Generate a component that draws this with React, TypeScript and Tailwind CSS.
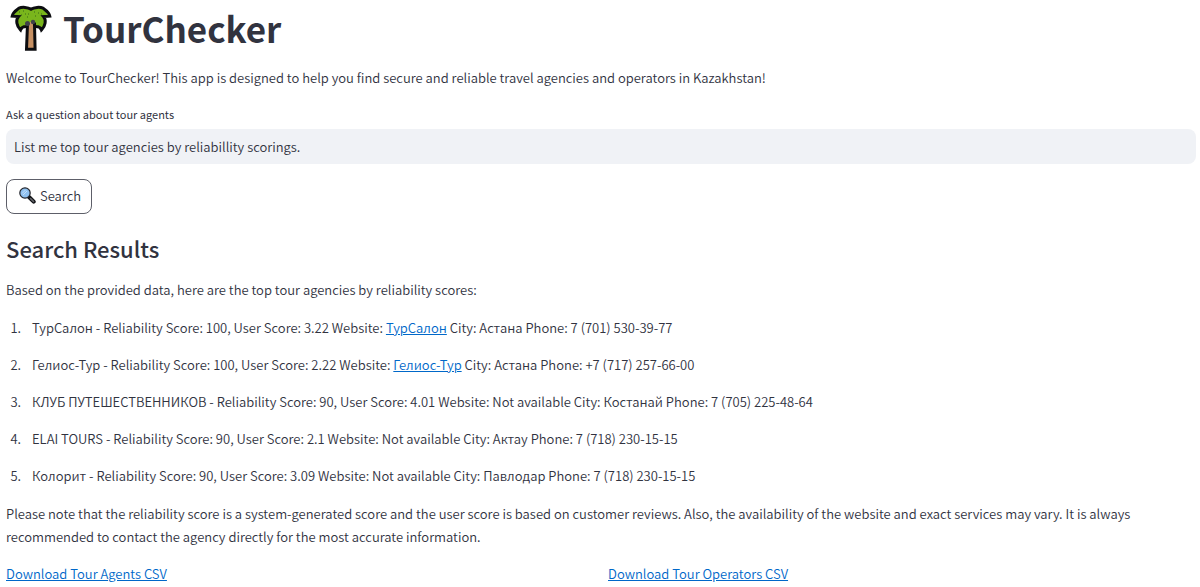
import { useState } from "react";

type Agency = {
  name: string;
  reliability: number;
  score: string;
  website?: string;
  city: string;
  phone: string;
};

const agencies: Agency[] = [
  { name: "ТурСалон", reliability: 100, score: "3.22", website: "#toursalon", city: "Астана", phone: "7 (701) 530-39-77" },
  { name: "Гелиос-Тур", reliability: 100, score: "2.22", website: "#helios-tour", city: "Астана", phone: "+7 (717) 257-66-00" },
  { name: "КЛУБ ПУТЕШЕСТВЕННИКОВ", reliability: 90, score: "4.01", city: "Костанай", phone: "7 (705) 225-48-64" },
  { name: "ELAI TOURS", reliability: 90, score: "2.1", city: "Актау", phone: "7 (718) 230-15-15" },
  { name: "Колорит", reliability: 90, score: "3.09", city: "Павлодар", phone: "7 (718) 230-15-15" },
];

function PalmIcon() {
  return (
    <svg viewBox="0 0 42 46" className="h-[46px] w-[42px] shrink-0" aria-hidden="true">
      <path
        d="M21 4.2C18 2.2 12 1.8 9 3.2 7 5 3 6.5 2.2 11.2L8.5 11.5C5.5 15 6.5 21 10.5 25C11.5 22 13 21.5 16 21.5L21 20L26 21.5C29 21.5 30.5 22 31.5 25C35.500 21 36.5 15 33.5 11.5L39.8 11.2C39 6.5 35 5 33 3.2C30 1.8 24 2.2 21 4.2Z"
        fill="#79b51c"
        stroke="#0c0d10"
        strokeWidth="3"
      />
      <path d="M17.5 19 16.5 44.3h8.600L24.500 19Z" fill="#c69063" stroke="#0c0d10" strokeWidth="3" />
      <path d="M19 17h4v4h-4Z" fill="#c69063" />
      <path
        d="M9 7h1m3-1h1m1 3h1m-5 1h1m6-1h1m5-2h1m3 1h1m2 1h1m-7 2h1m-9 1h1"
        stroke="#386819"
        strokeWidth="1"
      />
      <circle cx="17.5" cy="18.5" r="2.5" fill="#41424a" />
      <circle cx="23" cy="17" r="2.2" fill="#41424a" />
    </svg>
  );
}

function MagnifierIcon() {
  return (
    <svg viewBox="0 0 17 17" className="size-[17px] shrink-0" aria-hidden="true">
      <path d="m10 10 4.700 4.700" stroke="#111216" strokeWidth="4" strokeLinecap="round" />
      <path d="m11.5 11.5 3 3" stroke="#65676c" strokeWidth="1.6" strokeLinecap="round" />
      <circle cx="6" cy="6" r="5.2" fill="#8fc1f0" stroke="#23252b" strokeWidth="1.2" />
      <path d="M3 6.5 6.5 3M4 8l4-4" stroke="#c4e0fa" strokeWidth="1" />
    </svg>
  );
}

export default function App() {
  const [query, setQuery] = useState("List me top tour agencies by reliabillity scorings.");

  return (
    <main className="bg-white pt-[3px] pr-1 pl-1.5 font-['Noto_Sans_CJK_SC',sans-serif] text-[13px] leading-[23px] font-[350] text-[#31333f]">
      <h1 className="flex items-center gap-[11px] pl-1 text-[35px] leading-[50px] font-bold">
        <PalmIcon />
        TourChecker
      </h1>

      <p className="mt-[13px]">
        Welcome to TourChecker! This app is designed to help you find secure and reliable travel agencies and operators in Kazakhstan!
      </p>

      <form onSubmit={(e) => e.preventDefault()} className="mt-[15px]">
        <label htmlFor="question" className="block text-[11px] leading-5 font-normal">
          Ask a question about tour agents
        </label>
        <input
          id="question"
          type="text"
          value={query}
          onChange={(e) => setQuery(e.target.value)}
          className="mt-[5px] block h-[35px] w-full rounded-lg bg-[#f0f2f6] px-2 outline-none"
        />
        <button
          type="submit"
          className="mt-[15px] flex h-[35px] items-center gap-1 rounded-lg border border-[#5d5f69] bg-white pr-2.5 pb-0.5 pl-3"
        >
          <MagnifierIcon />
          Search
        </button>
      </form>

      <h2 className="mt-[18px] text-[22px] leading-8 font-medium">Search Results</h2>

      <p className="mt-3.5">Based on the provided data, here are the top tour agencies by reliability scores:</p>

      <ol className="my-[15px] flex list-outside list-decimal flex-col gap-3.5 pl-[18px]">
        {agencies.map((agency) => (
          <li key={agency.name} className="pl-2">
            {agency.name} - Reliability Score: {agency.reliability}, User Score: {agency.score} Website:{" "}
            {agency.website ? (
              <a href={agency.website} className="text-[#0068c9] underline">
                {agency.name}
              </a>
            ) : (
              "Not available"
            )}{" "}
            City: {agency.city} Phone: {agency.phone}
          </li>
        ))}
      </ol>

      <p>
        Please note that the reliability score is a system-generated score and the user score is based on customer reviews. Also, the
        availability of the website and exact services may vary. It is always recommended to contact the agency directly for the most
        accurate information.
      </p>

      <div className="mt-3.5 grid grid-cols-2 gap-3.5">
        <div>
          <a href="#agents-csv" className="text-[#0068c9] underline">
            Download Tour Agents CSV
          </a>
        </div>
        <div>
          <a href="#operators-csv" className="text-[#0068c9] underline">
            Download Tour Operators CSV
          </a>
        </div>
      </div>
    </main>
  );
}
